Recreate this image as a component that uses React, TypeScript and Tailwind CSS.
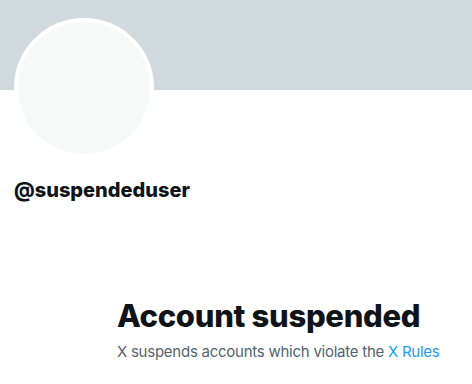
export default function App() {
  return (
    <div className="w-[472px] h-[384px] bg-white overflow-hidden" style={{ fontFamily: 'Inter, "Noto Sans", sans-serif' }}>
      <div className="h-[90px] bg-[#cfd9de]" />
      <div className="pl-[14px]">
        <div className="-mt-[72px] w-[140px] h-[140px] rounded-full border-4 border-white bg-[#f7f9f9]" />
        <div className="mt-[20px] text-[20px] leading-[24px] font-extrabold text-[#0f1419]">@suspendeduser</div>
      </div>
      <div className="pl-[117px] mt-[96px]">
        <div className="text-[31px] leading-[36px] font-extrabold text-[#0f1419] tracking-[-0.3px]">Account suspended</div>
        <div className="mt-[8px] text-[15px] leading-[20px] text-[#536471] tracking-[-0.25px]">
          X suspends accounts which violate the <span className="text-[#1d9bf0]">X Rules</span>
        </div>
      </div>
    </div>
  );
}
